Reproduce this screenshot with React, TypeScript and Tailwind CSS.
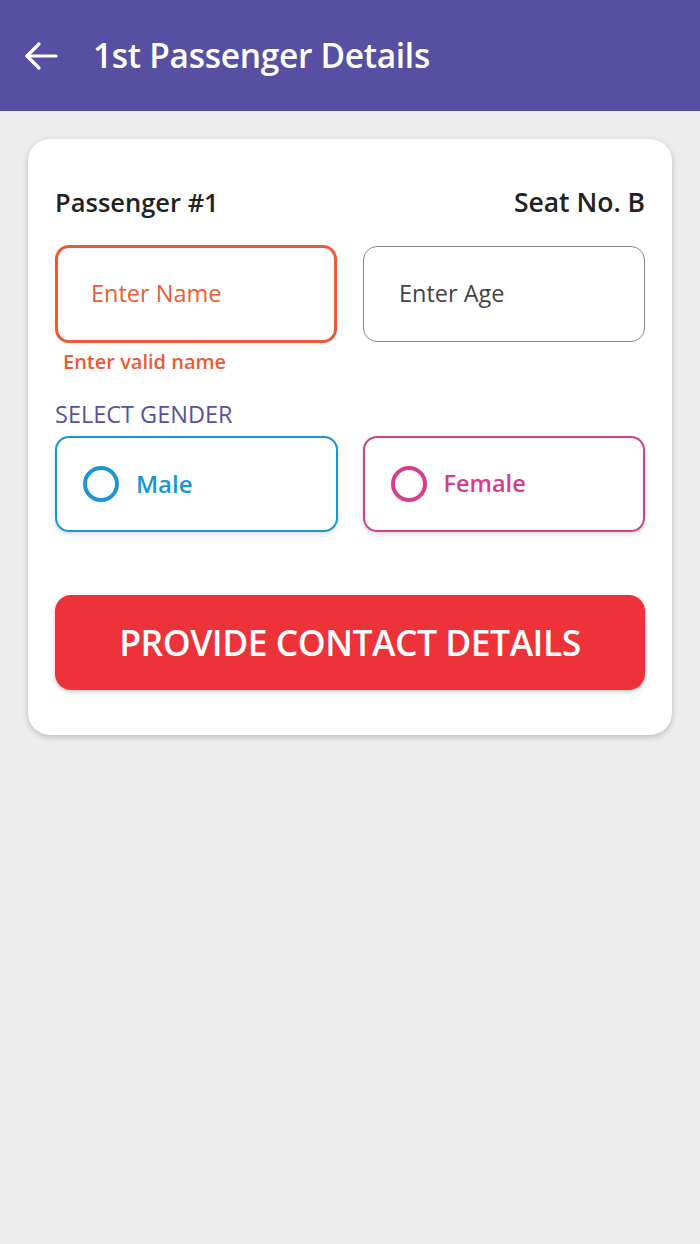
import React from "react";

export default function App() {
  return (
    <div className="min-h-[1244px] w-[700px] bg-[#ededed]" style={{ fontFamily: '"Open Sans", "Noto Sans", sans-serif' }}>
      <header className="h-[111px] bg-[#574fa2] flex items-center">
        <svg className="ml-[24px]" width="34" height="30" viewBox="0 0 34 30" fill="none" stroke="white" strokeWidth="3.2" strokeLinecap="round" strokeLinejoin="round">
          <path d="M32 15H3" />
          <path d="M15 3L3 15L15 27" />
        </svg>
        <h1 className="ml-[35px] text-white text-[33.5px] font-semibold tracking-[-0.3px]">1st Passenger Details</h1>
      </header>
      <main className="px-[28px] pt-[28px]">
        <div className="bg-white rounded-[22px] shadow-[0_2px_6px_rgba(0,0,0,0.22)] px-[27px] pt-[48px] pb-[45px]">
          <div className="flex justify-between items-center text-[25.5px] font-semibold text-[#222] leading-[30px]">
            <span>Passenger #1</span>
            <span className="text-[26.5px]">Seat No. B</span>
          </div>
          <div className="mt-[28px] grid grid-cols-2 gap-[26px]">
            <div>
              <div className="h-[98px] rounded-[14px] border-[3px] border-[#ef5a35] flex items-center pl-[33px] text-[23.5px] text-[#ef5a35]">Enter Name</div>
              <div className="mt-[7px] pl-[8px] text-[20px] font-semibold text-[#ef5a35] leading-[24px]">Enter valid name</div>
            </div>
            <div className="pt-[1px]">
              <div className="h-[96px] rounded-[14px] border border-[#888] flex items-center pl-[35px] text-[23.5px] text-[#444]">Enter Age</div>
            </div>
          </div>
          <div className="mt-[27px] text-[23.5px] text-[#5a4fa0] leading-[26px]">SELECT GENDER</div>
          <div className="mt-[9px] grid grid-cols-2 gap-[25px]">
            <div className="h-[96px] rounded-[14px] border-[2px] border-[#1a96d4] shadow-[0_2px_5px_rgba(0,0,0,0.15)] flex items-center pl-[26px]">
              <span className="w-[36px] h-[36px] rounded-full border-[4px] border-[#1a96d4]" />
              <span className="ml-[17px] text-[24px] font-semibold text-[#1a96d4]">Male</span>
            </div>
            <div className="h-[96px] rounded-[14px] border-[2px] border-[#d63d8a] shadow-[0_2px_5px_rgba(0,0,0,0.15)] flex items-center pl-[26px]">
              <span className="w-[36px] h-[36px] rounded-full border-[4px] border-[#d63d8a]" />
              <span className="ml-[17px] text-[23.5px] font-semibold text-[#d63d8a]">Female</span>
            </div>
          </div>
          <button className="mt-[63px] w-full h-[95px] rounded-[16px] bg-[#ee3239] shadow-[0_2px_5px_rgba(0,0,0,0.2)] text-white text-[35.5px] font-semibold tracking-[-0.5px]">PROVIDE CONTACT DETAILS</button>
        </div>
      </main>
    </div>
  );
}
